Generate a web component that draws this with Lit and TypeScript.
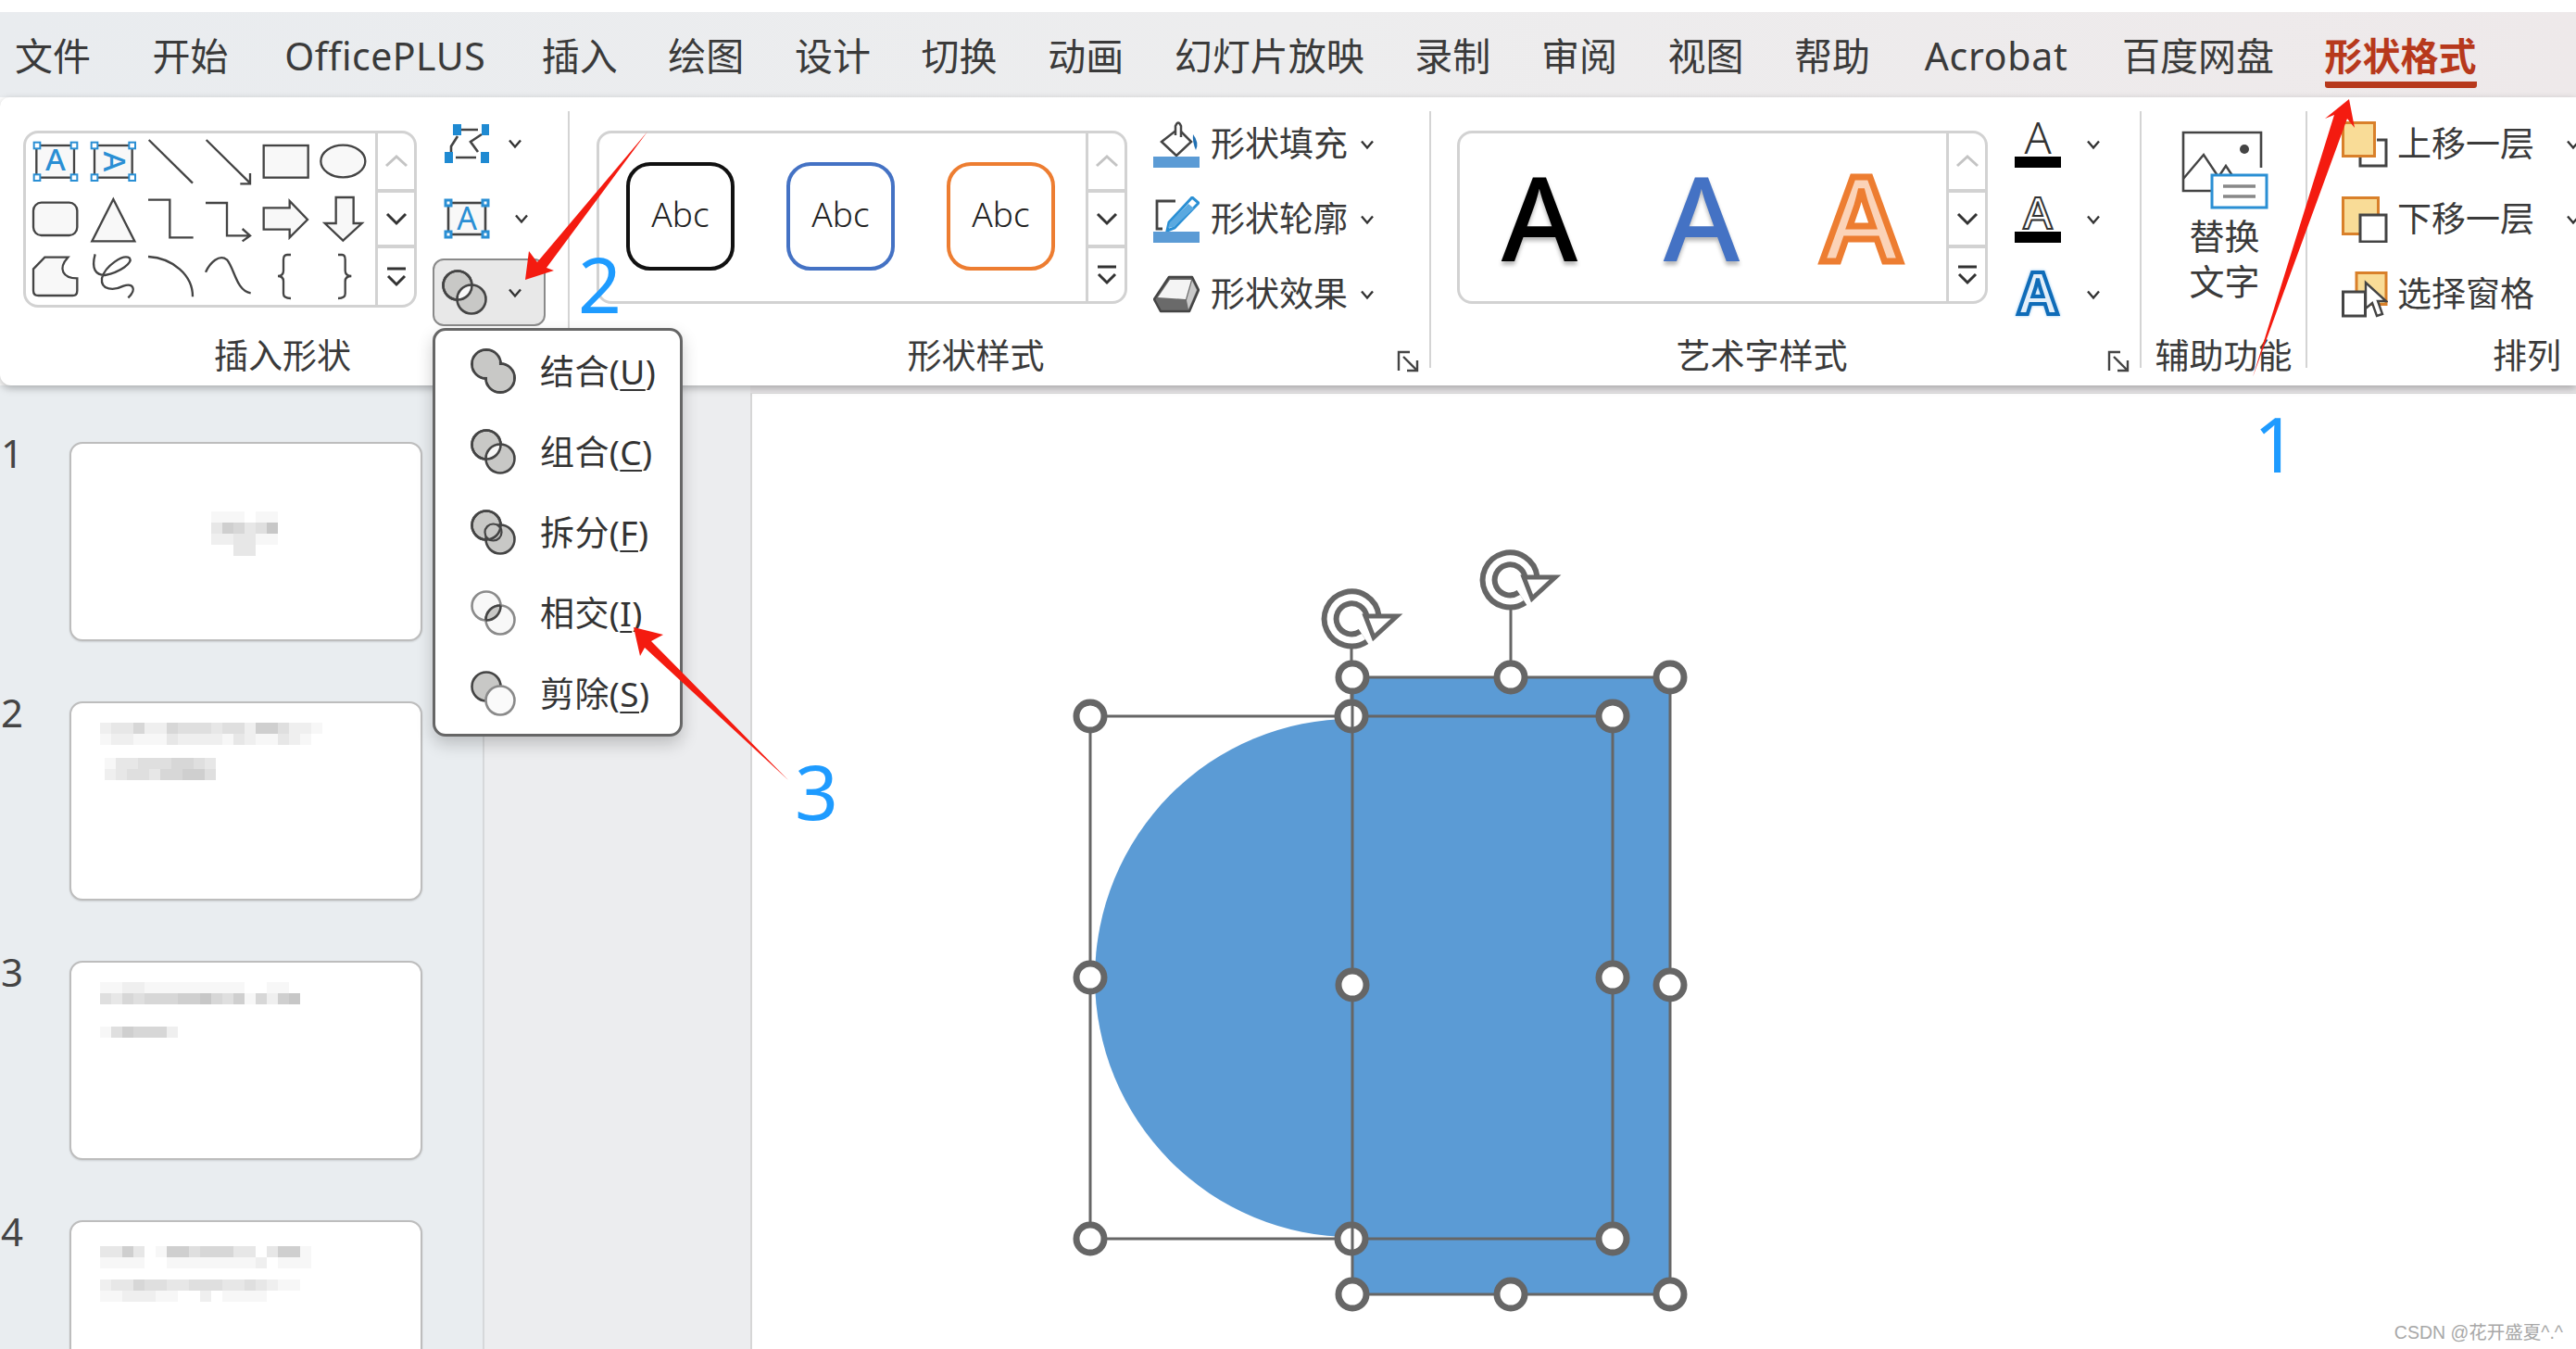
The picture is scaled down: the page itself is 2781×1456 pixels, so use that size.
import { LitElement, html, css, svg } from "lit";
import { customElement } from "lit/decorators.js";

const chev = (dir: "down" | "up" = "down", light = false) => html`<svg class="chev" viewBox="0 0 16 12" width="16" height="12"><path d=${dir === "down" ? "M2 2.5L8 9.5L14 2.5" : "M2 9.5L8 2.5L14 9.5"} fill="none" stroke=${light ? "#bdbdbd" : "#333"} stroke-width="2.4"/></svg>`;

const scrollCol = () => html`<div class="scroll">
  <div class="sc up">${html`<svg viewBox="0 0 26 16" width="26" height="16"><path d="M2 13L13 3L24 13" fill="none" stroke="#c4c4c4" stroke-width="3"/></svg>`}</div>
  <div class="sc mid"><svg viewBox="0 0 26 16" width="26" height="16"><path d="M3 3L13 13L23 3" fill="none" stroke="#333" stroke-width="3"/></svg></div>
  <div class="sc more"><svg viewBox="0 0 24 24" width="24" height="24"><path d="M2 3H22" stroke="#333" stroke-width="3"/><path d="M3 11L12 20L21 11" fill="none" stroke="#333" stroke-width="3"/></svg></div>
</div>`;

const launcher = () => html`<svg class="launch" viewBox="0 0 25 25" width="25" height="25"><path d="M2 22V2H14M7 7L22 22M22 11V22H11" fill="none" stroke="#444" stroke-width="2.4"/></svg>`;

let uid = 0;
const merge = (kind: string) => {
  const id = "mc" + uid++;
  const c1 = { cx: 17, cy: 17, r: 15.5 };
  const g = "#c8c8c6", d = "#444", l = "#8a8a8a";
  const defs = svg`<defs><clipPath id=${id}><circle cx=${c1.cx} cy=${c1.cy} r=${c1.r}/></clipPath><clipPath id="${id}b"><circle cx="32" cy="32" r="15.5"/></clipPath></defs>`;
  let body;
  if (kind === "union") {
    body = svg`<circle cx="17" cy="17" r="15.5" fill=${g} stroke=${d} stroke-width="3"/><circle cx="32" cy="32" r="15.5" fill=${g} stroke=${d} stroke-width="3"/><circle cx="17" cy="17" r="14" fill=${g}/><circle cx="32" cy="32" r="14" fill=${g}/>`;
  } else if (kind === "xor") {
    body = svg`<circle cx="17" cy="17" r="15.5" fill=${g} stroke=${d} stroke-width="2.6"/><circle cx="32" cy="32" r="15.5" fill=${g} stroke=${d} stroke-width="2.6"/><circle cx="32" cy="32" r="14" fill="#f8f8f8" clip-path="url(#${id})"/><circle cx="17" cy="17" r="15.5" fill="none" stroke=${d} stroke-width="2.6"/>`;
  } else if (kind === "frag") {
    body = svg`<circle cx="17" cy="17" r="15.5" fill=${g} stroke=${d} stroke-width="2.6"/><circle cx="32" cy="32" r="15.5" fill=${g} stroke=${d} stroke-width="2.6"/><circle cx="32" cy="32" r="14" fill="#f8f8f8" clip-path="url(#${id})"/><circle cx="24.5" cy="24.5" r="9" fill=${g} stroke=${d} stroke-width="2.2"/><circle cx="17" cy="17" r="15.5" fill="none" stroke=${d} stroke-width="2.6"/>`;
  } else if (kind === "inter") {
    body = svg`<circle cx="17" cy="17" r="15.5" fill="#f8f8f8" stroke=${l} stroke-width="2.6"/><circle cx="32" cy="32" r="15.5" fill="#f8f8f8" stroke=${l} stroke-width="2.6"/><circle cx="32" cy="32" r="15.5" fill=${g} stroke=${d} stroke-width="2.6" clip-path="url(#${id})"/><circle cx="17" cy="17" r="15.5" fill="none" stroke=${d} stroke-width="2.6" clip-path="url(#${id}b)"/>`;
  } else {
    body = svg`<circle cx="17" cy="17" r="15.5" fill=${g} stroke=${d} stroke-width="2.6"/><circle cx="32" cy="32" r="15.5" fill="#fafafa" stroke=${l} stroke-width="2.6"/>`;
  }
  return html`<svg class="merge" viewBox="0 0 49 49" width="49" height="49">${defs}${body}</svg>`;
};

const h = (x: number, y: number) => svg`<rect x=${x - 10} y=${y - 10} width="20" height="20" fill="#fff" stroke="#2a8fd4" stroke-width="6"/>`;

const galleryIcons = html`<svg class="gicons ov" viewBox="75 62 1140 573" width="380" height="191" preserveAspectRatio="none">
  <g fill="#f8f8f8" stroke="#444" stroke-width="7" stroke-linejoin="miter">
    <rect x="118" y="110" width="122" height="104"/>
    <rect x="306" y="110" width="122" height="104"/>
    <rect x="854" y="110" width="144" height="104"/>
    <ellipse cx="1111" cy="161" rx="72" ry="52"/>
    <rect x="108" y="295" width="142" height="106" rx="26"/>
    <path d="M367 284L298 420H436Z"/>
    <path d="M854 312H938V290L996 350L938 408V382H854Z"/>
    <path d="M1088 278H1145V362H1172L1111 418L1052 362H1088Z"/>
    <path d="M108 510L145 472H220Q195 500 205 520Q215 540 250 540V580Q250 596 235 596H125Q108 596 108 580Z"/>
  </g>
  <g fill="none" stroke="#444" stroke-width="7">
    <path d="M482 92L624 232"/>
    <path d="M668 92L810 232M778 234H810V200"/>
    <path d="M480 286H550V408H626"/>
    <path d="M666 296H735V402H808M785 380L810 402L785 420"/>
    <path d="M308 462C295 510 310 530 340 530C390 520 430 490 420 475C400 460 340 500 330 540C325 580 370 580 400 565C430 555 445 575 415 603"/>
    <path d="M480 470C560 475 625 530 624 600"/>
    <path d="M666 520C680 490 710 460 735 480C760 510 765 580 812 588"/>
    <path d="M942 464H930Q918 464 918 480V515Q918 533 900 533Q918 533 918 550V590Q918 605 942 605"/>
    <path d="M1095 464H1108Q1118 464 1118 480V515Q1118 533 1138 533Q1118 533 1118 550V590Q1118 605 1095 605"/>
  </g>
  ${[[120, 110], [240, 110], [120, 214], [240, 214], [306, 110], [428, 110], [306, 214], [428, 214]].map(([x, y]) => h(x, y))}
  <text x="180" y="192" text-anchor="middle" font-size="100" font-weight="500" fill="#2a8fd4">A</text>
  <text transform="translate(336 162) rotate(90)" text-anchor="middle" font-size="100" font-weight="500" fill="#2a8fd4" y="0">A</text>
</svg>`;

const shapeEdit = html`<svg viewBox="0 0 48 42" width="48" height="42"><path d="M12 6H36M12 36H34M14 13L7 24V30M40 11L28 19L36 30" fill="none" stroke="#444" stroke-width="2.6"/>
  <g fill="#1f8ad2"><rect x="9" y="0" width="9" height="12"/><rect x="40" y="0" width="8" height="12"/><rect x="0" y="30" width="9" height="12"/><rect x="39" y="30" width="9" height="12"/></g></svg>`;
const tbox = html`<svg class="ov" viewBox="0 0 48 44" width="48" height="44"><rect x="4" y="5" width="40" height="34" fill="#f8f8f8" stroke="#444" stroke-width="2.6"/>
  ${[[4, 5], [44, 5], [4, 39], [44, 39]].map(([x, y]) => svg`<rect x=${x - 3} y=${y - 3} width="6" height="6" fill="#fff" stroke="#2a8fd4" stroke-width="3"/>`)}
  <text x="24" y="34" text-anchor="middle" font-size="34" font-weight="400" fill="#2a8fd4">A</text></svg>`;

const fillIcon = html`<svg viewBox="0 0 50 50" width="50" height="50"><path d="M9 22L27 8L41 22L25 37Z" fill="#fff" stroke="#444" stroke-width="2.5"/><path d="M24 15V5Q27 -2 30 5V17" fill="#fff" stroke="#444" stroke-width="2.5"/><path d="M43 14Q50 23 46 31Q42 22 43 14Z" fill="#1f6fb2"/><rect x="0" y="38" width="50" height="12" fill="#5b9bd5"/></svg>`;
const lineIcon = html`<svg viewBox="0 0 50 50" width="50" height="50"><path d="M24 5H4V35H10" fill="none" stroke="#444" stroke-width="2.8"/><path d="M42 1L49 7L23 34L15 37L17 28Z" fill="#fff" stroke="#2a8fd4" stroke-width="3"/><path d="M38 8L44 13L22 33L16 34L18 28Z" fill="#5aa9e0"/><rect x="0" y="38" width="50" height="12" fill="#5b9bd5"/></svg>`;
const fxIcon = html`<svg viewBox="0 0 50 50" width="50" height="50"><path d="M1 30L17 6H42L49 20L39 43H8Z" fill="#6a6a6a" stroke="#444" stroke-width="2.5" stroke-linejoin="round"/><path d="M5 28L18 9H41L35 30Z" fill="#f4f4f4"/><path d="M36 31L42 10L47 20L38 41Z" fill="#c9c9c9"/></svg>`;

const aText = html`<svg class="ov" viewBox="0 0 50 50" width="50" height="50"><text x="25" y="35" text-anchor="middle" font-size="48" font-weight="300" fill="#333">A</text><rect y="38" width="50" height="12" fill="#000"/></svg>`;
const aOut = html`<svg class="ov" viewBox="0 0 50 50" width="50" height="50"><text x="25" y="35" text-anchor="middle" font-size="48" font-weight="500" fill="#fff" stroke="#333" stroke-width="2">A</text><rect y="38" width="50" height="12" fill="#000"/></svg>`;
const aFx = html`<svg class="ov afx" viewBox="0 0 50 50" width="50" height="50"><text x="25" y="46" text-anchor="middle" font-size="62" font-weight="700" fill="#e3eff9" stroke="#0f6cb8" stroke-width="4">A</text></svg>`;

const picIcon = html`<svg viewBox="0 0 94 85" width="94" height="85"><path d="M32 65H2V2H86V40" fill="none" stroke="#444" stroke-width="2.6"/><path d="M2 52L24 26L40 50L48 38L56 50" fill="none" stroke="#444" stroke-width="2.4"/><circle cx="68" cy="20" r="5" fill="#444"/><rect x="33" y="48" width="59" height="35" fill="#fff" stroke="#2a8fd4" stroke-width="3"/><path d="M45 60H80M45 71H80" stroke="#888" stroke-width="3.4"/></svg>`;
const upIcon = html`<svg viewBox="0 0 50 50" width="50" height="50"><path d="M38 20H48V48H20V38" fill="none" stroke="#444" stroke-width="3"/><rect x="1.5" y="1.5" width="34" height="36" fill="#f9dc97" stroke="#d9802a" stroke-width="3"/></svg>`;
const downIcon = html`<svg viewBox="0 0 50 50" width="50" height="50"><rect x="1.5" y="1.5" width="38" height="39" fill="#f9dc97" stroke="#d9802a" stroke-width="3"/><rect x="20" y="20" width="28" height="29" fill="#fff" stroke="#444" stroke-width="3"/></svg>`;
const paneIcon = html`<svg viewBox="0 0 50 50" width="50" height="50"><rect x="16" y="1.5" width="32" height="34" fill="#f9dc97" stroke="#d9802a" stroke-width="3"/><rect x="1.5" y="22" width="24" height="26" fill="#fff" stroke="#444" stroke-width="3"/><path d="M26 12V40L33 34L38 48L44 46L39 32H48Z" fill="#fff" stroke="#444" stroke-width="2.4"/></svg>`;

const rot = (x: number, y: number) => svg`<g transform="translate(${x} ${y})">
  <path d="M13 20A23 23 0 1 1 23 -2" fill="none" stroke="#666" stroke-width="19"/>
  <path d="M13 20A23 23 0 1 1 23 -2" fill="none" stroke="#fff" stroke-width="7"/>
  <path d="M15 -2H49L24 21Z" fill="#fff" stroke="#666" stroke-width="5"/>
</g>`;
const hd = (x: number, y: number) => svg`<circle cx=${x} cy=${y} r="15" fill="#fff" stroke="#666" stroke-width="7"/>`;

interface Block { left: number; top: number; rows: string[] }
const thumbs: Block[][] = [
  [{ left: 151, top: 73, rows: ["111011", "365347", "223311", "003300"] }],
  [
    { left: 31, top: 21, rows: ["23352254443442664221", "12211132222132113210"] },
    { left: 36, top: 14, rows: ["13344455430", "23443556640"] },
  ],
  [
    { left: 31, top: 21, rows: ["1122111111111001100", "4354555667546152670"] },
    { left: 31, top: 24, rows: ["1465552"] },
  ],
  [
    { left: 31, top: 26, rows: ["3363016645553303661", "1111001111111120111"] },
    { left: 31, top: 12, rows: ["233544334443343211", "1122211002011110"] },
  ],
];

const menu: [string, string, string][] = [
  ["union", "结合", "U"],
  ["xor", "组合", "C"],
  ["frag", "拆分", "F"],
  ["inter", "相交", "I"],
  ["sub", "剪除", "S"],
];
const tabs: [string, string][] = [
  ["文件", ""], ["开始", "after-first"], ["OfficePLUS", "latin"], ["插入", ""], ["绘图", ""], ["设计", ""], ["切换", ""], ["动画", ""],
  ["幻灯片放映", ""], ["录制", ""], ["审阅", ""], ["视图", ""], ["帮助", ""], ["Acrobat", "latin2"], ["百度网盘", ""],
];

@customElement("app-root")
export class AppRoot extends LitElement {
  static styles = css`
    :host { display: block; width: 2781px; height: 1456px; position: relative; overflow: hidden; background: #fff; color: #333;
      font-family: "Noto Sans", "Noto Sans CJK SC", sans-serif; }
    svg { display: block; flex: none; }
    svg.ov { overflow: visible; }
    .afx { filter: drop-shadow(0 0 1.5px #8fc3ee); }
    .tabs { margin-top: 13px; height: 92px; display: flex; gap: 54.6px; padding-left: 16px; align-items: flex-start;
      background: linear-gradient(90deg, #e9ecef 0%, #ededee 50%, #eee9ea 100%); font-size: 41px; line-height: 44px; }
    .tab { padding-top: 25px; white-space: nowrap; color: #3a3a3a; }
    .tab.after-first { margin-left: 12px; }
    .tab.latin { letter-spacing: .5px; padding: 25px 6px 0; }
    .tab.latin2 { letter-spacing: .7px; padding: 25px 4px 0; }
    .tab.active { color: #b7391c; font-weight: 700; box-sizing: border-box; border-bottom: 7px solid #b7391c; border-radius: 0 0 3px 3px; height: 82px; }
    .ribbon { position: relative; z-index: 2; height: 311px; background: #fff; display: flex; border-radius: 10px 0 0 12px; box-shadow: 0 3px 8px rgba(0,0,0,.28); }
    .group { display: flex; flex-direction: column; flex: none; overflow: hidden; }
    .gbody { height: 217px; padding-top: 36px; display: flex; align-items: flex-start; }
    .glabel { height: 50px; margin-top: 1px; display: grid; grid-template-columns: 1fr auto; align-items: center; font-size: 37px; line-height: 50px; text-align: center; color: #3a3a3a; white-space: nowrap; }
    .launch { margin-right: 10px; margin-top: 13px; }
    .g1 { width: 613px; } .g1 .gbody { padding-left: 25px; } .g1 .ltext { padding-right: 3px; }
    .g2 { width: 928px; } .g2 .gbody { padding-left: 29px; } .g2 .ltext { padding-right: 16px; }
    .g3 { width: 765px; } .g3 .gbody { padding-left: 28px; } .g3 .ltext { padding-right: 16px; }
    .g4 { width: 177px; } .g4 .gbody { flex-direction: column; align-items: center; }
    .g5 { width: 290px; } .g5 .gbody { padding-left: 37px; } .g5 .glabel { grid-template-columns: 1fr; text-align: right; padding-right: 16px; }
    .divider { flex: none; width: 2px; height: 277px; margin-top: 15px; background: #d4d4d4; }
    .gallery { box-sizing: border-box; flex: none; width: 573px; height: 187px; border: 3px solid #d2d2d2; border-radius: 16px; display: flex; overflow: hidden; background: #fff; }
    .g1 .gallery { width: 425px; height: 191px; }
    .gicons { margin: -3px 0 0 -3px; }
    .gmain { flex: 1; display: flex; }
    .scroll { flex: none; width: 39px; border-left: 3px solid #d2d2d2; display: grid; grid-template-rows: 60px 64px 1fr; }
    .sc { display: flex; align-items: center; justify-content: center; }
    .sc.mid { border-top: 4px solid #d2d2d2; border-bottom: 4px solid #d2d2d2; }
    .cards { padding: 31px 0 0 29px; gap: 56px; }
    .card { box-sizing: border-box; width: 117px; height: 117px; border: 4px solid #111; border-radius: 26px; display: flex; align-items: center; justify-content: center; font-size: 37px; font-weight: 300; padding-bottom: 6px; color: #222; }
    .card.blue { border-color: #4472c4; } .card.orange { border-color: #ed7d31; }
    .big { display: grid; grid-template-columns: repeat(3, 174px); }
    .bigA { font-size: 126px; line-height: 178px; text-align: center; font-weight: 500; text-shadow: 0 4px 4px rgba(0,0,0,.28); font-family: "Noto Sans", sans-serif; }
    .bigA.k { color: #000; margin-left: -2px; } .bigA.b { color: #4472c4; }
    .bigA.o { color: #fbd3b8; -webkit-text-stroke: 7px #ed7d31; font-weight: 600; text-shadow: none; margin-left: -3px; }
    .tools { margin-left: 17px; margin-top: -13px; display: flex; flex-direction: column; width: 122px; flex: none; }
    .trow { display: flex; align-items: center; height: 54px; padding-left: 13px; gap: 20px; }
    .trow.two { margin-top: 27px; gap: 27px; }
    .trow.active { box-sizing: border-box; height: 73px; margin-top: 16px; background: #e8e8e8; border: 2.5px solid #8a8a8a; border-radius: 12px; padding-left: 8px; gap: 22px; }
    .cmds { display: grid; grid-auto-rows: 81px; margin-top: -26px; flex: none; }
    .g2 .cmds { margin-left: 28px; } .g3 .cmds { margin-left: 29px; } 
    .cmd { display: flex; align-items: center; gap: 12px; font-size: 37px; white-space: nowrap; color: #3a3a3a; }
    .cmd span { margin-top: -5px; }
    .cmd .chev { margin-left: 1px; }
    .g3 .cmd { gap: 26px; }
    .g5 .cmd { gap: 10px; }
    .g5 .cmd .chev { margin-left: 24px; }
    .alt { font-size: 38px; line-height: 49px; text-align: center; color: #3a3a3a; margin-top: 4px; margin-left: -1px; }
    .alt-wrap { display: flex; flex-direction: column; align-items: center; padding-left: 3px; }
    .body { height: 1040px; display: flex; overflow: hidden; background: #e6e4e6; }
    .side { box-sizing: border-box; flex: none; width: 521px; height: 1040px; background: #e9edf0; padding-top: 61px; display: flex; flex-direction: column; gap: 65px; }
    .srow { display: grid; grid-template-columns: 75px 381px; height: 215px; flex: none; }
    .num { font-size: 42px; line-height: 24px; padding-left: 1px; color: #444; }
    .thumb { box-sizing: border-box; background: #fff; border: 2.5px solid #bdbdbd; border-radius: 14px; height: 215px; overflow: hidden; box-shadow: 0 1px 2px rgba(0,0,0,.12); }
    .mrow { display: flex; }
    .cell { width: 12px; height: 12px; flex: none; }
    .strip { box-sizing: border-box; flex: none; width: 289px; background: #ecedef; border-left: 2px solid #d6d8da; }
    .canvas { flex: 1; position: relative; margin-top: 9px; background: #fff; border-left: 2px solid #d6d6d6; box-shadow: 0 -1px 0 #dcdcdc; }
    .stage { width: 100%; height: 100%; }
    .wm { position: absolute; right: 14px; bottom: 6px; font-size: 19.5px; line-height: 24px; color: #a8a8a8; white-space: nowrap; font-family: "Liberation Sans", "Noto Sans CJK SC", sans-serif; }
    .menu { position: absolute; z-index: 3; left: 467px; top: 354px; width: 270px; box-sizing: border-box; background: #fff; border: 3.5px solid #666; border-radius: 14px; box-shadow: 0 8px 18px rgba(0,0,0,.2); }
    .mi { height: 87px; display: flex; align-items: center; padding-left: 38px; gap: 26px; font-size: 37px; color: #333; white-space: nowrap; }
    .mi span { margin-top: -4px; letter-spacing: .4px; }
    .mi u { text-underline-offset: 5px; text-decoration-thickness: 1.5px; }
    .notes { position: absolute; z-index: 4; left: 0; top: 0; pointer-events: none; }
    .notes text { font-size: 82px; fill: #1e9bff; font-family: "Noto Sans", sans-serif; }
  `;

  render() {
    return html`
      <div class="tabs">
        ${tabs.map(([t, c]) => html`<div class="tab ${c}">${t}</div>`)}
        <div class="tab active">形状格式</div>
      </div>
      <div class="ribbon">
        <div class="group g1">
          <div class="gbody">
            <div class="gallery"><div class="gmain">${galleryIcons}</div>${scrollCol()}</div>
            <div class="tools">
              <div class="trow">${shapeEdit}${chev()}</div>
              <div class="trow two">${tbox}${chev()}</div>
              <div class="trow active">${merge("xor")}${chev()}</div>
            </div>
          </div>
          <div class="glabel"><span class="ltext">插入形状</span></div>
        </div>
        <div class="divider"></div>
        <div class="group g2">
          <div class="gbody">
            <div class="gallery">
              <div class="gmain cards">
                <div class="card">Abc</div><div class="card blue">Abc</div><div class="card orange">Abc</div>
              </div>${scrollCol()}
            </div>
            <div class="cmds">
              <div class="cmd">${fillIcon}<span>形状填充</span>${chev()}</div>
              <div class="cmd">${lineIcon}<span>形状轮廓</span>${chev()}</div>
              <div class="cmd">${fxIcon}<span>形状效果</span>${chev()}</div>
            </div>
          </div>
          <div class="glabel"><span class="ltext">形状样式</span>${launcher()}</div>
        </div>
        <div class="divider"></div>
        <div class="group g3">
          <div class="gbody">
            <div class="gallery">
              <div class="gmain big"><div class="bigA k">A</div><div class="bigA b">A</div><div class="bigA o">A</div></div>${scrollCol()}
            </div>
            <div class="cmds">
              <div class="cmd">${aText}${chev()}</div>
              <div class="cmd">${aOut}${chev()}</div>
              <div class="cmd">${aFx}${chev()}</div>
            </div>
          </div>
          <div class="glabel"><span class="ltext">艺术字样式</span>${launcher()}</div>
        </div>
        <div class="divider"></div>
        <div class="group g4">
          <div class="gbody">
            <div class="alt-wrap">${picIcon}<div class="alt">替换<br />文字</div></div>
          </div>
          <div class="glabel"><span class="ltext">辅助功能</span></div>
        </div>
        <div class="divider"></div>
        <div class="group g5">
          <div class="gbody">
            <div class="cmds">
              <div class="cmd">${upIcon}<span>上移一层</span>${chev()}</div>
              <div class="cmd">${downIcon}<span>下移一层</span>${chev()}</div>
              <div class="cmd">${paneIcon}<span>选择窗格</span></div>
            </div>
          </div>
          <div class="glabel"><span class="ltext">排列</span></div>
        </div>
      </div>
      <div class="body">
        <div class="side">
          ${thumbs.map((blocks, i) => html`<div class="srow">
            <div class="num">${i + 1}</div>
            <div class="thumb">
              ${blocks.map((b) => html`<div style="margin-left:${b.left}px;padding-top:${b.top}px">
                ${b.rows.map((r) => html`<div class="mrow">${[...r].map((c) => html`<div class="cell" style="background:rgb(${255 - +c * 8},${255 - +c * 8},${255 - +c * 8})"></div>`)}</div>`)}
              </div>`)}
            </div>
          </div>`)}
        </div>
        <div class="strip"></div>
        <div class="canvas">
          <svg class="stage" viewBox="812 425 1969 1031" preserveAspectRatio="none">
            <rect x="1460" y="731" width="343" height="666" fill="#5b9bd5"/>
            <path d="M1460 776A278 279.5 0 0 0 1460 1335Z" fill="#5b9bd5"/>
            <g fill="none" stroke="#666" stroke-width="3">
              <rect x="1460" y="731" width="343" height="666"/>
              <rect x="1177" y="773" width="564" height="564"/>
              <path d="M1631 657V731M1459 699V773"/>
            </g>
            ${rot(1630, 625)}${rot(1459, 667)}
            ${[[1177, 773], [1459, 773], [1741, 773], [1177, 1055], [1741, 1055], [1177, 1337], [1459, 1337], [1741, 1337], [1460, 731], [1631, 731], [1803, 731], [1460, 1063], [1803, 1063], [1460, 1397], [1631, 1397], [1803, 1397]].map(([x, y]) => hd(x, y))}
            <path d="M1460 760V786M1460 1324V1350" stroke="#666" stroke-width="3"/>
          </svg>
          <div class="wm">CSDN @花开盛夏^.^</div>
        </div>
      </div>
      <div class="menu">
        ${menu.map(([k, t, u]) => html`<div class="mi">${merge(k)}<span>${t}(<u>${u}</u>)</span></div>`)}
      </div>
      <svg class="notes" width="2781" height="1456" viewBox="0 0 2781 1456">
        <g fill="#f41b10">
          <path d="M2536 107L2510 128L2520 124L2432 407L2534 128L2542 138Z"/>
          <path d="M567 302L571 271L580 283L699 142L590 289L598 292Z"/>
          <path d="M684 677L716 685L703 692L851 842L696 699L691 708Z"/>
        </g>
        <text x="2433" y="510">1</text>
        <text x="624" y="338">2</text>
        <text x="858" y="885">3</text>
      </svg>
    `;
  }
}
